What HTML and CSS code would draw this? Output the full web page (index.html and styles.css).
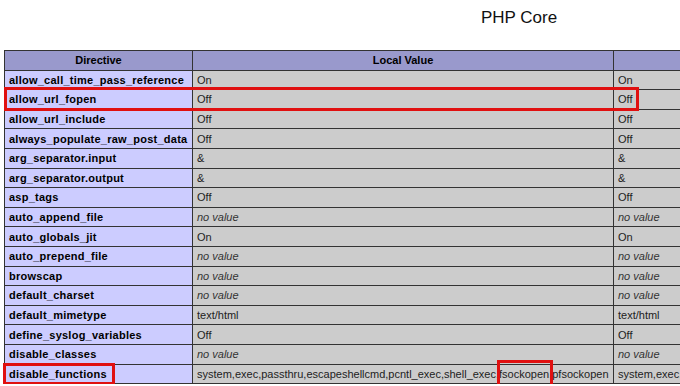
FILE: index.html
```html
<!DOCTYPE html>
<html lang="en">

<head>
    <meta charset="UTF-8">
    <title>phpinfo() - PHP Core</title>
    <link rel="stylesheet" href="styles.css">
</head>

<body>

    <div class="page">
        <h2 class="title">PHP Core</h2>

        <table class="info">
            <tr class="head">
                <th class="col-dir">Directive</th>
                <th class="col-val">Local Value</th>
                <th class="col-val">Master Value</th>
            </tr>
            <tr><td class="e">allow_call_time_pass_reference</td><td class="v">On</td><td class="v">On</td></tr>
            <tr><td class="e">allow_url_fopen</td><td class="v">Off</td><td class="v">Off</td></tr>
            <tr><td class="e">allow_url_include</td><td class="v">Off</td><td class="v">Off</td></tr>
            <tr><td class="e">always_populate_raw_post_data</td><td class="v">Off</td><td class="v">Off</td></tr>
            <tr><td class="e">arg_separator.input</td><td class="v">&amp;</td><td class="v">&amp;</td></tr>
            <tr><td class="e">arg_separator.output</td><td class="v">&amp;</td><td class="v">&amp;</td></tr>
            <tr><td class="e">asp_tags</td><td class="v">Off</td><td class="v">Off</td></tr>
            <tr><td class="e">auto_append_file</td><td class="v"><i>no value</i></td><td class="v"><i>no value</i></td></tr>
            <tr><td class="e">auto_globals_jit</td><td class="v">On</td><td class="v">On</td></tr>
            <tr><td class="e">auto_prepend_file</td><td class="v"><i>no value</i></td><td class="v"><i>no value</i></td></tr>
            <tr><td class="e">browscap</td><td class="v"><i>no value</i></td><td class="v"><i>no value</i></td></tr>
            <tr><td class="e">default_charset</td><td class="v"><i>no value</i></td><td class="v"><i>no value</i></td></tr>
            <tr><td class="e">default_mimetype</td><td class="v">text/html</td><td class="v">text/html</td></tr>
            <tr><td class="e">define_syslog_variables</td><td class="v">Off</td><td class="v">Off</td></tr>
            <tr><td class="e">disable_classes</td><td class="v"><i>no value</i></td><td class="v"><i>no value</i></td></tr>
            <tr><td class="e">disable_functions</td><td class="v">system,exec,passthru,escapeshellcmd,pcntl_exec,shell_exec,fsockopen,pfsockopen</td><td class="v">system,exec,passthru,escapeshellcmd,pcntl_exec,shell_exec,fsockopen,pfsockopen</td></tr>
        </table>

        <!-- red highlight marks drawn over the screenshot -->
        <div class="mark mark-fopen"></div>
        <div class="mark mark-disable"></div>
        <div class="mark mark-fsock"></div>
    </div>

</body>

</html>
```

FILE: styles.css
```css
body {
    margin: 0;
    padding: 0;
    background-color: #fff;
    color: #000;
    font-family: "Liberation Sans", Arial, sans-serif;
    overflow: hidden;
}

/* Page wrapper, wider than the window like the original phpinfo page */
.page {
    position: relative;
    width: 1030px;
    padding-left: 4px;
}

.title {
    margin: 0;
    height: 50px;
    padding-top: 7px;
    box-sizing: border-box;
    text-align: center;
    font-size: 17px;
    font-weight: normal;
    line-height: 22px;
    color: #111;
}

/* Info table */
.info {
    width: 1030px;
    border-collapse: collapse;
    table-layout: fixed;
    font-size: 11px;
}

.info th,
.info td {
    box-sizing: border-box;
    border: 1px solid #333;
    height: 19.6px;
    padding: 0 4px;
    white-space: nowrap;
    overflow: hidden;
    vertical-align: middle;
}

.info .col-dir {
    width: 188px;
}

.info .col-val {
    width: 421px;
}

.head th {
    background-color: #9999cc;
    font-weight: bold;
    text-align: center;
    color: #000;
}

.info .e {
    background-color: #ccccff;
    font-weight: bold;
    color: #000;
    letter-spacing: 0.25px;
}

.info .v {
    background-color: #cccccc;
    color: #222;
}

.info .v i {
    color: #333;
}

/* Red annotation boxes */
.mark {
    position: absolute;
    border: 3px solid #e01010;
    box-sizing: border-box;
}

.mark-fopen {
    left: 4px;
    top: 87px;
    width: 635px;
    height: 24px;
}

.mark-disable {
    left: 3px;
    top: 363px;
    width: 112px;
    height: 22px;
}

.mark-fsock {
    left: 497px;
    top: 360px;
    width: 56px;
    height: 30px;
}
```
